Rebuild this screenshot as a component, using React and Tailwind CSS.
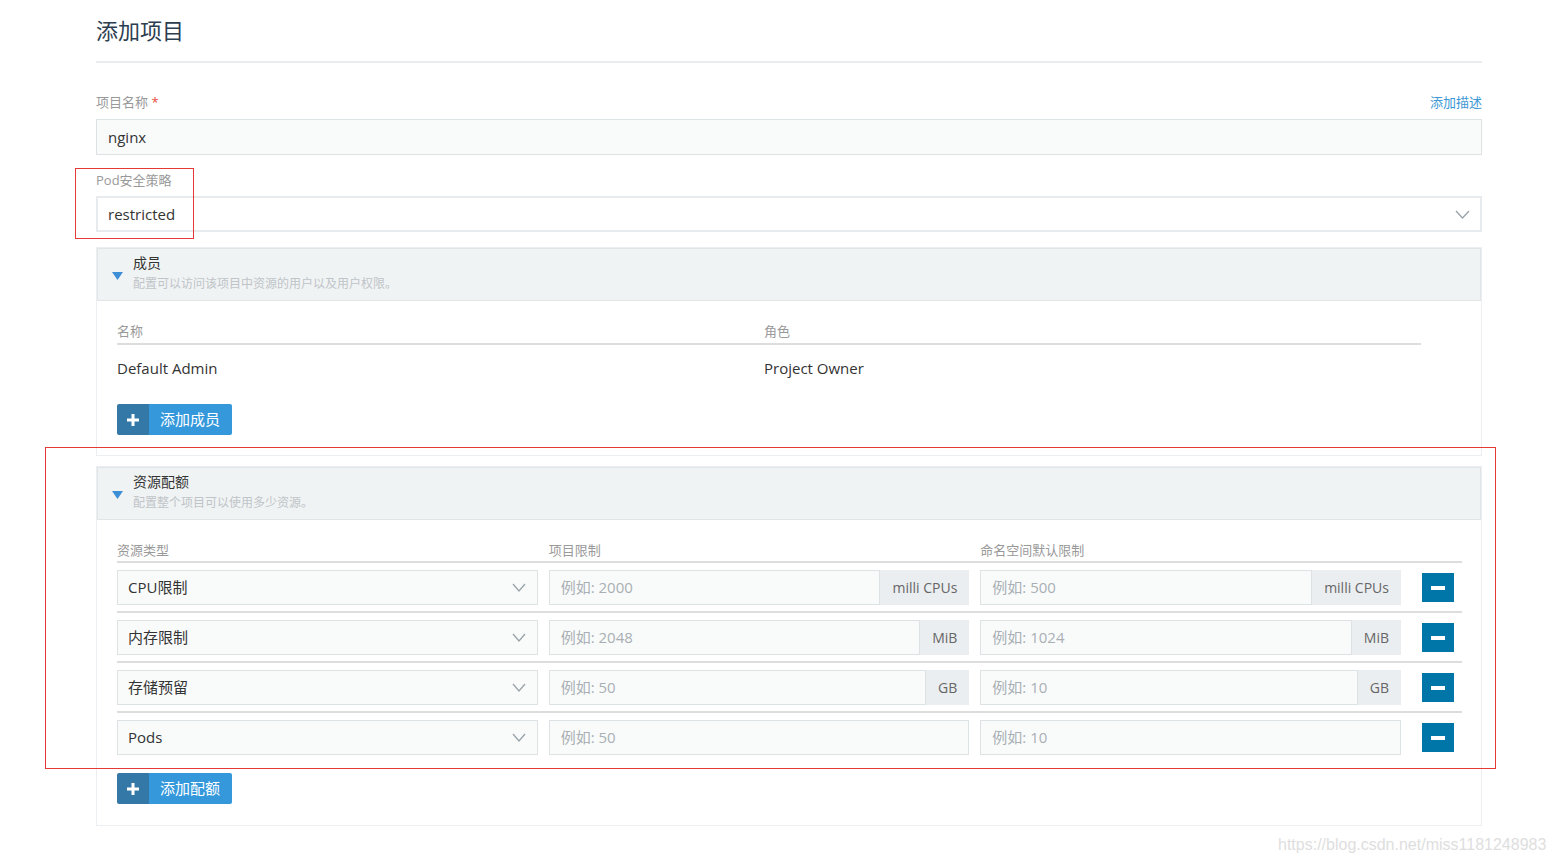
import React from "react";

// Caret pointing down, used on the collapsible panel headers
const Caret = () => (
  <svg width="11" height="8" viewBox="0 0 11 8">
    <polygon points="0,0 11,0 5.5,8" fill="#3d8fd6" />
  </svg>
);

const Chevron = ({ w = 15 }) => (
  <svg width={w} height="9" viewBox={`0 0 ${w} 9`} fill="none">
    <polyline points={`1,1 ${w / 2},8 ${w - 1},1`} stroke="#9aa3a8" strokeWidth="1.3" />
  </svg>
);

const Plus = () => (
  <svg width="12" height="12" viewBox="0 0 12 12">
    <rect x="4.5" y="0" width="3" height="12" fill="#fff" />
    <rect x="0" y="4.5" width="12" height="3" fill="#fff" />
  </svg>
);

const AddButton = ({ label }) => (
  <button className="flex h-[31px] items-stretch rounded-[2px] overflow-hidden text-white text-[15px]">
    <span className="flex w-[32px] items-center justify-center bg-[#3478a8]">
      <Plus />
    </span>
    <span className="flex items-center bg-[#3498db] pl-[11px] pr-[12px]">{label}</span>
  </button>
);

const PanelHeader = ({ title, sub }) => (
  <div className="flex h-[53px] border border-[#e1e5e7] bg-[#f0f3f4] pl-[14px]">
    <div className="flex items-center pt-[2px]">
      <Caret />
    </div>
    <div className="ml-[10px] pt-[2px]">
      <div className="text-[14px] leading-[24px] text-[#333]">{title}</div>
      <div className="text-[12px] leading-[18px] text-[#bfc4c8]">{sub}</div>
    </div>
  </div>
);

// quota rows: type, project limit, namespace default limit, unit
const quotas = [
  { type: "CPU限制", project: "例如: 2000", ns: "例如: 500", unit: "milli CPUs" },
  { type: "内存限制", project: "例如: 2048", ns: "例如: 1024", unit: "MiB" },
  { type: "存储预留", project: "例如: 50", ns: "例如: 10", unit: "GB" },
  { type: "Pods", project: "例如: 50", ns: "例如: 10", unit: "" },
];

const LimitInput = ({ placeholder, unit }) => (
  <div className="flex h-[35px]">
    <div className="flex flex-1 items-center border border-[#dde3e5] bg-[#f9fbfb] pl-[11px] text-[15px] text-[#a9afb4]">
      {placeholder}
    </div>
    {unit && (
      <div className="flex items-center bg-[#ebeef0] px-[12px] text-[14px] text-[#666]">{unit}</div>
    )}
  </div>
);

export default function App() {
  return (
    <div
      className="relative h-[863px] w-full overflow-hidden bg-white"
      style={{ fontFamily: '"Open Sans", "Noto Sans CJK SC", sans-serif' }}
    >
      <div className="ml-[96px] w-[1386px] pt-[15px]">
        {/* Title */}
        <h1 className="h-[30px] text-[22px] leading-[30px] text-[#2c3e50]">添加项目</h1>
        <div className="mt-[16px] h-[2px] bg-[#e9edef]" />

        {/* Project name */}
        <div className="mt-[31px] flex h-[18px] items-center justify-between text-[13px]">
          <span className="text-[#999]">
            项目名称 <span className="text-[#e74c3c]">*</span>
          </span>
          <span className="text-[#3d98d3]">添加描述</span>
        </div>
        <div className="mt-[7px] flex h-[36px] items-center border border-[#dde2e4] bg-[#f9fbfb] pl-[11px] text-[15px] text-[#333]">
          nginx
        </div>

        {/* Pod security policy */}
        <div className="mt-[16px] h-[18px] text-[13px] leading-[18px] text-[#999]">Pod安全策略</div>
        <div className="mt-[7px] flex h-[36px] items-center justify-between border-2 border-[#e8ebed] bg-white pl-[10px] pr-[10px] text-[15px] text-[#333]">
          <span>restricted</span>
          <Chevron />
        </div>

        {/* Members */}
        <div className="mt-[15px] border border-[#eceff1]">
          <PanelHeader title="成员" sub="配置可以访问该项目中资源的用户以及用户权限。" />
          <div className="pl-[20px] pr-[60px] pt-[21px] pb-[20px]">
            <div className="grid grid-cols-[647px_1fr] border-b-2 border-[#dddddd] pb-[3px] text-[13px] leading-[18px] text-[#999]">
              <span>名称</span>
              <span>角色</span>
            </div>
            <div className="mt-[12px] grid grid-cols-[647px_1fr] text-[15px] leading-[22px] text-[#333]">
              <span>Default Admin</span>
              <span>Project Owner</span>
            </div>
            <div className="mt-[25px]">
              <AddButton label="添加成员" />
            </div>
          </div>
        </div>

        {/* Resource quota */}
        <div className="mt-[10px] border border-[#eceff1]">
          <PanelHeader title="资源配额" sub="配置整个项目可以使用多少资源。" />
          <div className="pl-[20px] pr-[19px] pt-[21px] pb-[21px]">
            <div className="grid grid-cols-[1fr_1fr_1fr_50px] gap-x-[11px] border-b-2 border-[#dddddd] pb-[2px] text-[13px] leading-[18px] text-[#999]">
              <span>资源类型</span>
              <span>项目限制</span>
              <span>命名空间默认限制</span>
              <span />
            </div>
            {quotas.map((q, i) => (
              <div
                key={q.type}
                className={`grid grid-cols-[1fr_1fr_1fr_50px] gap-x-[11px] pt-[7px] pb-[6px] ${
                  i < quotas.length - 1 ? "border-b-2 border-[#dddddd]" : ""
                }`}
              >
                <div className="flex h-[35px] items-center justify-between border border-[#dde3e5] bg-[#f9fbfb] pl-[10px] pr-[11px] text-[15px] text-[#333]">
                  <span>{q.type}</span>
                  <Chevron w={14} />
                </div>
                <LimitInput placeholder={q.project} unit={q.unit} />
                <LimitInput placeholder={q.ns} unit={q.unit} />
                <div className="flex items-center pl-[10px]">
                  <button className="flex h-[29px] w-[32px] items-center justify-center bg-[#0075a8]">
                    <span className="block h-[4px] w-[14px] bg-white" />
                  </button>
                </div>
              </div>
            ))}
            <div className="mt-[12px]">
              <AddButton label="添加配额" />
            </div>
          </div>
        </div>
      </div>

      {/* Red annotation boxes */}
      <div className="pointer-events-none absolute left-[75px] top-[168px] h-[71px] w-[119px] border border-[#e53935]" />
      <div className="pointer-events-none absolute left-[45px] top-[447px] h-[322px] w-[1451px] border border-[#e53935]" />

      {/* Watermark */}
      <div
        className="absolute left-[1278px] top-[835px] text-[16px] leading-[20px] text-[#dedede]"
        style={{ fontFamily: '"Liberation Sans", Arial, sans-serif' }}
      >
        https://blog.csdn.net/miss1181248983
      </div>
    </div>
  );
}
